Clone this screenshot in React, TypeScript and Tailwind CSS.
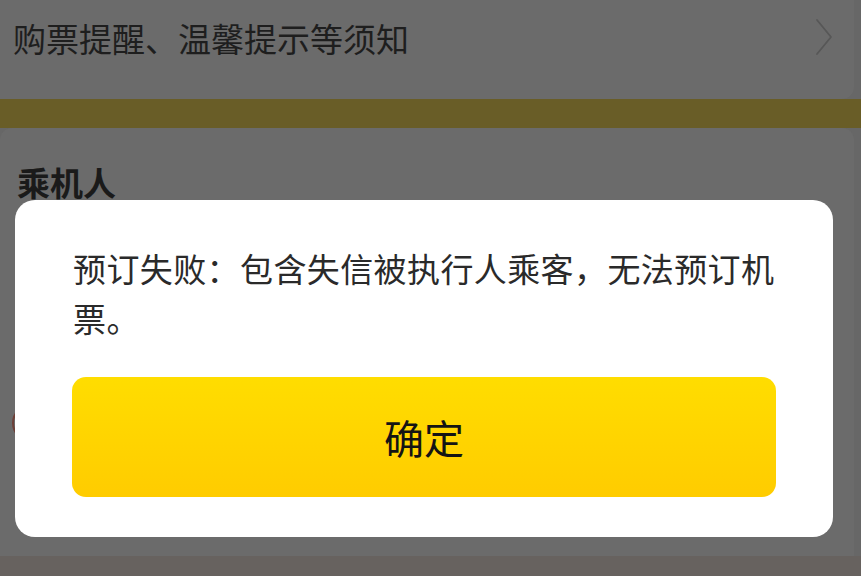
const cjk = "font-['Noto_Sans_CJK_SC','Noto_Sans',sans-serif]";

function Chevron() {
  return (
    <svg width="20" height="38" viewBox="0 0 20 38" fill="none" className="mt-[18px]">
      <path d="M3 2 L17 19 L3 36" stroke="#575757" strokeWidth="1.8" strokeLinecap="round" strokeLinejoin="round" />
    </svg>
  );
}

export default function App() {
  return (
    <div className={`relative w-[861px] h-[576px] overflow-hidden bg-[#676767] ${cjk}`}>
      {/* page behind the mask */}
      <div className="flex flex-col h-full">
        <div className="h-[99px] mr-[7px] bg-[#6b6b6b] rounded-br-[12px] flex items-start justify-between pl-[13px] pr-[20px]">
          <p className="mt-[18px] text-[33px] leading-[40px] text-[#1e1e1e]">购票提醒、温馨提示等须知</p>
          <Chevron />
        </div>
        <div className="h-[29px] bg-[#695d27]" />
        <div className="h-[428px] mr-[7px] bg-[#6b6b6b] rounded-t-[12px] pl-[17px] pt-[34px] flex flex-col">
          <h3 className="text-[33px] leading-[40px] font-bold text-[#1a1a1a]">乘机人</h3>
          <div className="mt-[202px] -ml-[5px] w-[38px] h-[38px] rounded-full border-2 border-[#6e4038]" />
        </div>
        <div className="flex-1 bg-[#67625f]" />
      </div>

      {/* dialog */}
      <div className="absolute left-[15px] top-[200px] w-[818px] h-[337px] bg-white rounded-[20px] px-[57px] pt-[43px] flex flex-col">
        <p className="ml-px w-[710px] text-[33px] leading-[50px] tracking-[0.4px] text-[#2a2a2a]">
          预订失败：包含失信被执行人乘客，无法预订机票。
        </p>
        <button className="mt-[34px] w-[704px] h-[120px] rounded-[14px] bg-gradient-to-b from-[#ffdd00] to-[#ffcc00] text-[40px] text-[#141414] flex items-center justify-center">
          确定
        </button>
      </div>
    </div>
  );
}
